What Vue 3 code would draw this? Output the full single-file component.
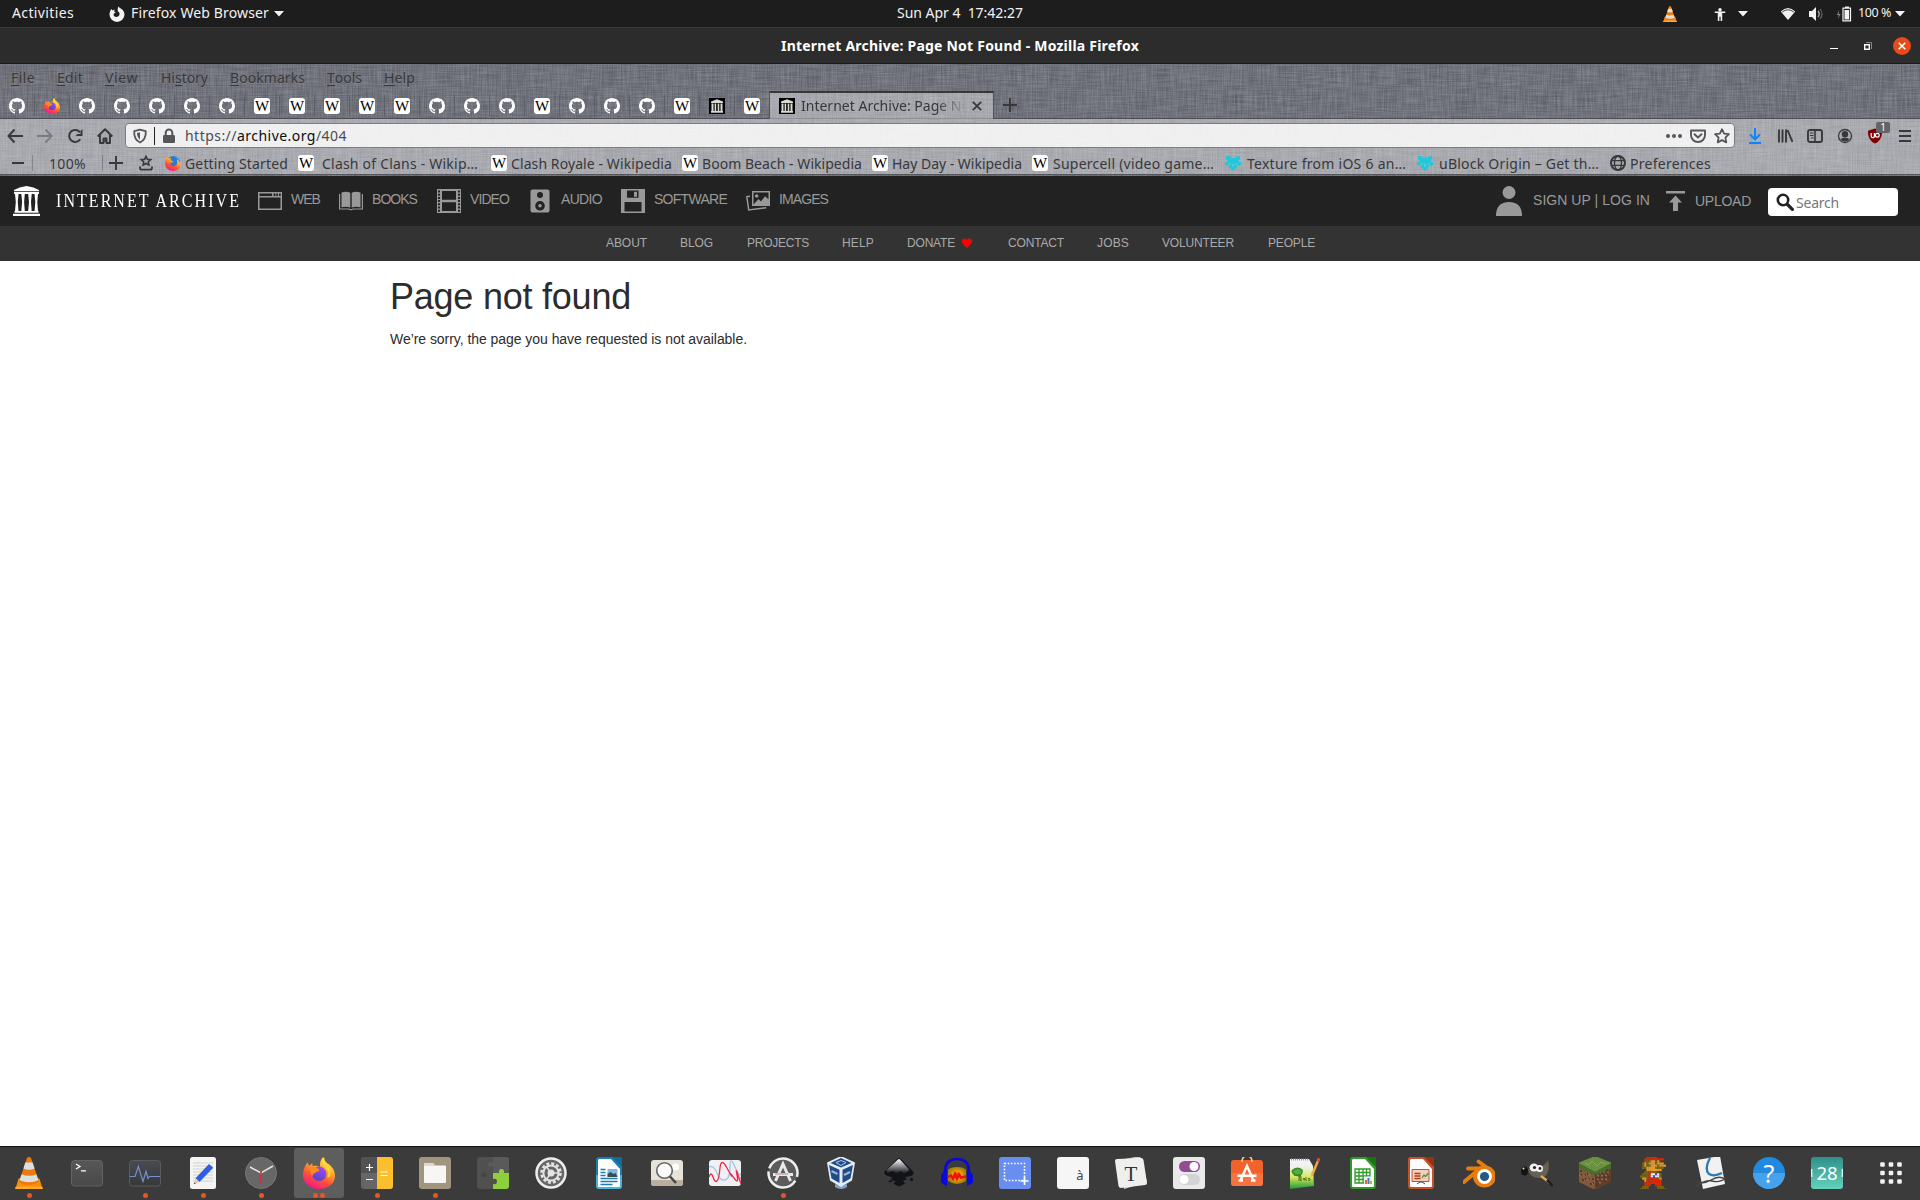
<script setup>
import { h } from 'vue'

// Spreads the letters of a label so that it fills its slot exactly.
function fitText(el, width) {
  const range = document.createRange()
  range.selectNodeContents(el)
  const natural = range.getBoundingClientRect().width
  const count = Array.from(el.textContent).length
  if (natural && count) el.style.letterSpacing = (width - natural) / count + 'px'
}
const vFit = { mounted: (el, binding) => fitText(el, binding.value) }

// A horizontal run of icons and labels; `at` is where an item starts in the bar.
function Strip(props) {
  let end = props.from || 0
  return h('div', { class: 'strip' }, props.items.map((item) => {
    const style = { marginLeft: item.at - end + 'px', width: item.w + 'px' }
    if (item.dy) style.marginTop = item.dy * 2 + 'px'
    end = item.at + item.w
    if (item.icon === 'wiki') return h('span', { class: 'wiki', style }, 'W')
    if (item.icon === 'ublock') {
      return h('div', { class: 'ublock', style }, [
        h('svg', { class: 'ublock-shield' }, [h('use', { href: '#ublock' })]),
        h('span', { class: 'ublock-badge' }, '1')
      ])
    }
    if (item.icon) {
      style.height = (item.h || item.w) + 'px'
      return h('svg', { class: ['icon', item.cls], style }, [h('use', { href: '#' + item.icon })])
    }
    if (item.rule) {
      return h('i', { class: 'rule', style: { ...style, height: item.rule + 'px' } })
    }
    let content = item.text
    if (item.key !== undefined) {
      content = [item.text.slice(0, item.key), h('u', item.text[item.key]), item.text.slice(item.key + 1)]
    }
    return h('span', {
      class: ['label', item.cls], style,
      onVnodeMounted: (vnode) => fitText(vnode.el, item.w)
    }, content)
  }))
}
Strip.props = ['items', 'from']

const panel = [
  { at: 12, w: 62, text: 'Activities' },
  { at: 109, w: 16, icon: 'ff-mono' },
  { at: 131, w: 138, text: 'Firefox Web Browser' },
  { at: 274, w: 10, h: 6, icon: 'caret' },
  { at: 897, w: 126, text: 'Sun Apr 4  17:42:27' },
  { at: 1662, w: 16, icon: 'vlc' },
  { at: 1713, w: 14, icon: 'person' },
  { at: 1738, w: 10, h: 6, icon: 'caret' },
  { at: 1780, w: 16, icon: 'wifi' },
  { at: 1808, w: 16, icon: 'volume' },
  { at: 1836, w: 16, icon: 'battery' },
  { at: 1858, w: 33, text: '100 %', cls: 'small' },
  { at: 1895, w: 10, h: 6, icon: 'caret' }
]
const windowButtons = [
  { at: 1830, w: 8, icon: 'minimize' },
  { at: 1863, w: 10, icon: 'restore' },
  { at: 1893, w: 18, icon: 'close-round' }
]
const menus = [
  { at: 11, w: 24, text: 'File', key: 0 },
  { at: 57, w: 26, text: 'Edit', key: 0 },
  { at: 105, w: 33, text: 'View', key: 0 },
  { at: 161, w: 47, text: 'History', key: 2 },
  { at: 230, w: 75, text: 'Bookmarks', key: 0 },
  { at: 327, w: 35, text: 'Tools', key: 0 },
  { at: 384, w: 31, text: 'Help', key: 0 }
]
const tabs = 'gh ff gh gh gh gh gh wiki wiki wiki wiki wiki gh gh gh wiki gh gh gh wiki ia-fav wiki'.split(' ')
const navLeft = [
  { at: 7, w: 16, icon: 'back' },
  { at: 37, w: 16, icon: 'forward', cls: 'faded' },
  { at: 67, w: 16, icon: 'reload' },
  { at: 97, w: 16, icon: 'home' }
]
const identity = [
  { at: 132, w: 16, icon: 'shield' },
  { at: 154, w: 1, rule: 18 },
  { at: 161, w: 16, icon: 'lock' }
]
const pageActions = [
  { at: 1666, w: 16, icon: 'dots' },
  { at: 1690, w: 16, icon: 'pocket' },
  { at: 1714, w: 16, icon: 'star' }
]
const navRight = [
  { at: 1747, w: 16, icon: 'download', cls: 'blue' },
  { at: 1777, w: 16, icon: 'library' },
  { at: 1807, w: 16, icon: 'sidebar' },
  { at: 1837, w: 16, icon: 'account' },
  { at: 1868, w: 22, icon: 'ublock' },
  { at: 1897, w: 16, icon: 'burger' }
]
const bookmarks = [
  { at: 10, w: 16, icon: 'minus' },
  { at: 32, w: 1, rule: 16 },
  { at: 49, w: 37, text: '100%' },
  { at: 102, w: 1, rule: 16 },
  { at: 108, w: 16, icon: 'plus' },
  { at: 138, w: 16, icon: 'bookmark-tray' },
  { at: 165, w: 16, icon: 'ff-classic' },
  { at: 185, w: 103, text: 'Getting Started' },
  { at: 298, w: 16, icon: 'wiki' },
  { at: 322, w: 156, text: 'Clash of Clans - Wikip…' },
  { at: 491, w: 16, icon: 'wiki' },
  { at: 511, w: 161, text: 'Clash Royale - Wikipedia' },
  { at: 682, w: 16, icon: 'wiki' },
  { at: 702, w: 160, text: 'Boom Beach - Wikipedia' },
  { at: 872, w: 16, icon: 'wiki' },
  { at: 892, w: 130, text: 'Hay Day - Wikipedia' },
  { at: 1032, w: 16, icon: 'wiki' },
  { at: 1053, w: 161, text: 'Supercell (video game…' },
  { at: 1225, w: 16, icon: 'puzzle' },
  { at: 1247, w: 159, text: 'Texture from iOS 6 an…' },
  { at: 1417, w: 16, icon: 'puzzle' },
  { at: 1439, w: 160, text: 'uBlock Origin – Get th…' },
  { at: 1610, w: 16, icon: 'globe' },
  { at: 1630, w: 81, text: 'Preferences' }
]
const media = [
  { at: 13, w: 27, h: 30, icon: 'ia-logo', cls: 'white' },
  { at: 56, w: 185, text: 'INTERNET ARCHIVE', cls: 'wordmark' },
  { at: 258, w: 24, icon: 'm-web' },
  { at: 291, w: 29, text: 'WEB', dy: -2 },
  { at: 339, w: 24, icon: 'm-books' },
  { at: 372, w: 45, text: 'BOOKS', dy: -2 },
  { at: 437, w: 24, icon: 'm-video' },
  { at: 470, w: 39, text: 'VIDEO', dy: -2 },
  { at: 528, w: 24, icon: 'm-audio' },
  { at: 561, w: 41, text: 'AUDIO', dy: -2 },
  { at: 621, w: 24, icon: 'm-software' },
  { at: 654, w: 73, text: 'SOFTWARE', dy: -2 },
  { at: 746, w: 24, icon: 'm-images' },
  { at: 779, w: 49, text: 'IMAGES', dy: -2 }
]
const accountLinks = [
  { at: 1496, w: 26, h: 30, icon: 'user' },
  { at: 1533, w: 117, text: 'SIGN UP | LOG IN', dy: -1 },
  { at: 1666, w: 19, h: 20, icon: 'upload' },
  { at: 1695, w: 56, text: 'UPLOAD' }
]
const links = [
  { at: 606, w: 41, text: 'ABOUT' },
  { at: 680, w: 33, text: 'BLOG' },
  { at: 747, w: 62, text: 'PROJECTS' },
  { at: 842, w: 32, text: 'HELP' },
  { at: 907, w: 48, text: 'DONATE' },
  { at: 961, w: 12, icon: 'heart' },
  { at: 1008, w: 56, text: 'CONTACT' },
  { at: 1097, w: 32, text: 'JOBS' },
  { at: 1162, w: 72, text: 'VOLUNTEER' },
  { at: 1268, w: 47, text: 'PEOPLE' }
]
const dock = [
  ['vlc', 1], ['terminal', 0], ['monitor', 1], ['editor', 1], ['clock', 1], ['ff', 2], ['calc', 1],
  ['files', 1], ['extensions', 0], ['settings', 0], ['writer', 0], ['viewer', 0], ['plot', 0], ['updater', 1],
  ['vbox', 0], ['inkscape', 0], ['audacity', 0], ['screenshot', 0], ['chars', 0], ['fonts', 0], ['tweaks', 0],
  ['software', 0], ['notepad', 0], ['sheet', 0], ['impress', 0], ['blender', 0], ['gimp', 0], ['minecraft', 0],
  ['mario', 0], ['evince', 0], ['help', 0], ['calendar', 0], ['apps', 0]
]
const glyphs = { chars: 'à', fonts: 'T', help: '?', calendar: '28' }

// Pixel rows of the plumber sprite: R red, B brown, S skin, W white, U blue.
const sprite = [
  '...RRRRR....', '..RRRRRRRRR.', '..BBBSSBS...', '.BSBSSSBSSS.', '.BSBBSSSBSSS', '.BBSSSSBBBB.', '...SSSSSSS..',
  '..BBRBBB....', '.BBBRWWUWB..', 'BBBBRWUWWB..', '.SSBRRRRBS..', '..SRRRRRRR..', '..RRRRRRRR..', '..RRR..RRR..', '.BBB....BBB.', 'BBBB....BBBB'
]
const tint = { R: '#dc2a08', B: '#806808', S: '#e89c30', W: '#f4f4ff', U: '#4050d8' }
const pixels = sprite.flatMap((row, y) => [...row].map((c, x) => ({ x, y, fill: tint[c] })).filter((p) => p.fill))
const pixelBlocks = Array.from({ length: 56 }, (_, i) => {
  const x = (i * 7) % 30
  const drop = Math.abs(x - 15) / 2
  return { x, y: 15 + (i * 5) % 14 - drop, dark: i % 2 }
})
</script>

<template>
  <div class="desktop">
    <svg class="sprite" width="0" height="0" aria-hidden="true">
      <defs>
        <linearGradient id="g-ff" x1=".8" y1="0" x2=".3" y2="1"><stop offset="0" stop-color="#fff44f" /><stop offset=".35" stop-color="#ffb02a" /><stop offset=".65" stop-color="#ff5634" /><stop offset="1" stop-color="#f2148c" /></linearGradient>
        <linearGradient id="g-purple" x1=".7" y1="0" x2=".3" y2="1"><stop offset="0" stop-color="#a04dee" /><stop offset="1" stop-color="#5441c8" /></linearGradient>
        <linearGradient id="g-key" x1="0" y1="0" x2="0" y2="1"><stop offset="0" stop-color="#585858" /><stop offset="1" stop-color="#484848" /></linearGradient>
        <linearGradient id="g-night" x1="0" y1="0" x2="0" y2="1"><stop offset="0" stop-color="#4a4b50" /><stop offset="1" stop-color="#37383c" /></linearGradient>
        <linearGradient id="g-teal" x1="0" y1="0" x2="0" y2="1"><stop offset="0" stop-color="#2f8f8b" /><stop offset="1" stop-color="#63d3bb" /></linearGradient>
        <linearGradient id="g-note" x1="0" y1="0" x2="0" y2="1"><stop offset="0" stop-color="#f4f6ff" /><stop offset=".3" stop-color="#eef0e4" /><stop offset=".6" stop-color="#d8e860" /><stop offset="1" stop-color="#1a9a38" /></linearGradient>
        <linearGradient id="g-ink" x1="0" y1="0" x2="0" y2="1"><stop offset="0" stop-color="#fff" /><stop offset=".45" stop-color="#8a8c90" /><stop offset=".9" stop-color="#15171b" /></linearGradient>
        <radialGradient id="g-wave"><stop offset="0" stop-color="#f01800" /><stop offset=".5" stop-color="#f0a000" /><stop offset="1" stop-color="#a08010" /></radialGradient>
      </defs>

      <!-- panel -->
      <symbol id="ff-mono" viewBox="0 0 16 16"><path fill="currentColor" d="M9.500 0.200c.3 1.200 1.100 1.700 2.300 2.300 1.800 1 3.700 3 3.700 6.100a7.500 7.300 0 0 1-15 0c0-2.200.8-4.300 2.100-5.600l.6 1.400c.7-.4 1.700-.6 2.600-.5-.7.700-1 1.100-.8 1.700l1.500.3c.2 1-.9 1-1.600 1.700-.5.600-.4 2 .4 2.700 1.500 1.300 4 .8 4.900-1 .9-1.600.2-3.500-1.400-4.100-.3-2 .1-3.700.7-5z" /></symbol>
      <symbol id="caret" viewBox="0 0 10 6"><path d="M0 0h10L5 5.500z" fill="currentColor" /></symbol>
      <symbol id="person" viewBox="0 0 14 16"><path fill="currentColor" d="M7 1a2 2 0 1 1 0 4 2 2 0 0 1 0-4zM1 5.200h12v1.600H9.500V16H7.700v-5H6.300v5H4.500V6.800H1z" /></symbol>
      <symbol id="wifi" viewBox="0 0 16 16"><path d="M.8 5.500Q8-1.500 15.200 5.500L8 14z" fill="currentColor" /><path d="M2.200 6Q8 1.500 13.800 6" fill="none" stroke="#1d1d1d" stroke-width=".8" /></symbol>
      <symbol id="volume" viewBox="0 0 16 16"><path d="M1 5h3l4-4v14l-4-4H1z" fill="currentColor" /><path d="M10 5q2.500 3 0 6" fill="none" stroke="#bbb" stroke-width="1.200" /><path d="M12 3q4 5 0 10" fill="none" stroke="#666" stroke-width="1.200" /></symbol>
      <symbol id="battery" viewBox="0 0 16 16"><path d="M9 2.200h5.500v12.600H7V2.200zM9 1h4" fill="none" stroke="currentColor" stroke-width="1.200" /><path d="M8.500 4h4.600v9.500H8.500z" fill="currentColor" /><path d="M3.300 4L.8 9h2L2 13l2.500-5h-2z" fill="#888" /></symbol>
      <symbol id="vlc" viewBox="0 0 32 32"><path d="M5.500 21.500h21l3 10.500h-27z" fill="#f78b0b" /><path d="M2.800 29.500h26.400L30 32H2z" fill="#ffab24" /><path d="M14 1q2-2 4 0l8 24q-10 6-20 0z" fill="#ef7a0c" /><path d="M12.300 5.500h7.300l2 6q-5.600 2.500-11.200 0zM8.600 17.300q7.400 3 14.800 0l2 6q-9.400 4-18.800 0z" fill="#dcdfe0" /></symbol>
      <symbol id="minimize" viewBox="0 0 8 8"><path d="M0 6.500h8" stroke="#fff" /></symbol>
      <symbol id="restore" viewBox="0 0 10 10"><path d="M3 1.500h5.500V8" fill="none" stroke="#888" /><path d="M1.700 3.700h4.600v4.600H1.700z" fill="none" stroke="#fff" stroke-width="1.400" /></symbol>
      <symbol id="close-round" viewBox="0 0 18 18"><circle cx="9" cy="9" r="9" fill="#e54c19" /><path d="M5.700 5.700l6.600 6.600m0-6.600l-6.600 6.600" stroke="#fff" stroke-width="1.600" /></symbol>

      <!-- browser -->
      <symbol id="gh" viewBox="0 0 16 16"><path fill="#fff" d="M8 0C3.580 0 0 3.580 0 8c0 3.540 2.290 6.530 5.470 7.590.4.070.55-.17.55-.38 0-.19-.01-.82-.01-1.490-2.010.37-2.530-.49-2.690-.94-.09-.23-.48-.94-.82-1.130-.28-.15-.68-.52-.01-.53.63-.01 1.080.58 1.230.82.72 1.210 1.870.87 2.330.66.07-.52.28-.87.51-1.070-1.780-.2-3.640-.89-3.640-3.950 0-.87.31-1.590.82-2.150-.08-.2-.36-1.020.08-2.120 0 0 .67-.21 2.200.82.64-.18 1.320-.27 2-.27.68 0 1.360.09 2 .27 1.530-1.040 2.200-.82 2.200-.82.44 1.100.16 1.920.08 2.120.51.56.82 1.270.82 2.150 0 3.070-1.870 3.750-3.650 3.950.29.25.54.73.54 1.480 0 1.070-.01 1.930-.01 2.200 0 .21.15.46.55.38A8.010 8.010 0 0 0 16 8c0-4.420-3.580-8-8-8z" /></symbol>
      <symbol id="ia-fav" viewBox="0 0 16 16"><path fill="#000" d="M0 0h16v16H0z" /><path fill="#d9d9d2" d="M2 3.500L8 1.300l6 2.200V5H2zM2 13h12v1.700H2zM2.500 5.500h2V13h-2zM5.600 5.500h1.600V13H5.600zM8.700 5.500h1.600V13H8.700zM11.500 5.500h2V13h-2z" /></symbol>
      <symbol id="ff" viewBox="0 0 32 32"><path fill="url(#g-ff)" d="M20.500 0c.5 3 2 4.500 4 6.500l1.200.5c4 3 6.300 7.300 6.300 12C32 26.500 25 32 16 32S0 26 0 18C0 14 1.200 9.500 4.500 5.500l1.600 3.300 3.200-2.600.4 3c3-.8 5.300-.3 7.500 1.300C16.500 6 17.500 2.600 20.500 0z" /><circle cx="16.200" cy="16.800" r="7.200" fill="url(#g-purple)" /><path d="M3.500 12.500c3.500-3.600 7.800-3.500 11.800-.8l1.200 2.300c-2 .2-3.400 1-4.500 2.300-1.700.2-2.500 1.300-2.500 3-2-1.300-2.300-3.700-1-5.500z" fill="#ff8a1c" /><path d="M20.500 1c-.8 4 .5 6.500 3.300 9 3.200 3 3.500 6.500 1.500 10" fill="none" stroke="#ffdb40" stroke-width="2.400" opacity=".8" /></symbol>
      <symbol id="ff-classic" viewBox="0 0 32 32"><circle cx="17" cy="15" r="13" fill="#2c78d4" /><path d="M17 3q9 0 13 8l-4-1q-2-5-9-7z" fill="#1fb5f2" /><path fill="url(#g-ff)" d="M3 3l4 4 5-1-1 4 7 4-7 2c-1 5 4 8 9 6 5-3 6-8 3-13 6 2 8 7 8 11 0 7-7 12-15 12S0 26 0 17C0 11 1 7 3 3z" /></symbol>
      <symbol id="close" viewBox="0 0 10 10"><path d="M.8.800l8.400 8.400m0-8.400L.8 9.200" stroke="currentColor" stroke-width="1.800" /></symbol>
      <symbol id="plus" viewBox="0 0 16 16"><path d="M8 1v14M1 8h14" stroke="currentColor" stroke-width="1.900" /></symbol>
      <symbol id="minus" viewBox="0 0 16 16"><path d="M2 8h12" stroke="currentColor" stroke-width="2" /></symbol>
      <symbol id="back" viewBox="0 0 16 16"><path d="M7.500 1.500L1.500 8l6 6.500M2 8h14" fill="none" stroke="currentColor" stroke-width="2" /></symbol>
      <symbol id="forward" viewBox="0 0 16 16"><path d="M8.500 1.500l6 6.500-6 6.500M14 8H0" fill="none" stroke="currentColor" stroke-width="2" /></symbol>
      <symbol id="reload" viewBox="0 0 16 16"><path d="M13.200 11.200A6 6 0 1 1 13 4.400" fill="none" stroke="currentColor" stroke-width="2" /><path d="M15.500 1v7h-7l2-2h3V3z" fill="currentColor" /></symbol>
      <symbol id="home" viewBox="0 0 16 16"><path d="M.7 8.500L8 1.300l7.300 7.200M3 7v8h3.500v-4.500h3V15H13V7" fill="none" stroke="currentColor" stroke-width="1.900" stroke-linejoin="round" /><path d="M7.200 11.500h1.600V14H7.200z" fill="currentColor" /></symbol>
      <symbol id="shield" viewBox="0 0 16 16"><path d="M8 1.700l5.800 1.500c.2 5-1 9-5.800 11.300C3.200 12.200 2 8.200 2.200 3.200z" fill="none" stroke="currentColor" stroke-width="1.800" stroke-linejoin="round" /><path d="M8 4.300v7.400C5.500 9.700 5 7.700 5 5.100z" fill="currentColor" /></symbol>
      <symbol id="lock" viewBox="0 0 16 16"><rect x="2" y="7" width="12" height="8" rx="1.300" fill="currentColor" /><path d="M4.700 8V4.800a3.300 3.300 0 0 1 6.600 0V8" fill="none" stroke="currentColor" stroke-width="2" /></symbol>
      <symbol id="dots" viewBox="0 0 16 16"><g fill="currentColor"><circle cx="2" cy="8" r="2" /><circle cx="8" cy="8" r="2" /><circle cx="14" cy="8" r="2" /></g></symbol>
      <symbol id="pocket" viewBox="0 0 16 16"><path d="M1 2.500h14V7c0 4-3 7-7 7s-7-3-7-7zM4.500 6.200L8 9.500l3.500-3.300" fill="none" stroke="currentColor" stroke-width="1.900" stroke-linejoin="round" stroke-linecap="round" /></symbol>
      <symbol id="star" viewBox="0 0 16 16"><path d="M8 1.200l2.100 4.400 4.800.6-3.500 3.400.9 4.800L8 12.100l-4.300 2.300.9-4.800L1.100 6.200l4.800-.6z" fill="none" stroke="currentColor" stroke-width="1.800" stroke-linejoin="round" /></symbol>
      <symbol id="download" viewBox="0 0 16 16"><path d="M8 0v11M3 6.500L8 11.300l5-4.800M2 15h12" fill="none" stroke="currentColor" stroke-width="2" /></symbol>
      <symbol id="library" viewBox="0 0 16 16"><path d="M2 1.500v13M5.500 1.500v13M9 1.500v13M10.500 2l5 12" stroke="currentColor" stroke-width="1.900" /></symbol>
      <symbol id="sidebar" viewBox="0 0 16 16"><rect x="1" y="2" width="14" height="12" rx="2" fill="none" stroke="currentColor" stroke-width="1.900" /><path d="M8 2v12" stroke="currentColor" stroke-width="1.600" /><path d="M3 5h3.500M3 7.500h3.500M4 10h2.500" stroke="currentColor" /></symbol>
      <symbol id="account" viewBox="0 0 16 16"><circle cx="8" cy="8" r="6.500" fill="none" stroke="currentColor" stroke-width="1.300" /><circle cx="8" cy="6.300" r="3.200" fill="currentColor" /><path d="M3.500 11q4.500-2.500 9 0-1.500 2.600-4.500 2.600T3.500 11z" fill="currentColor" /></symbol>
      <symbol id="ublock" viewBox="0 0 14 16"><path d="M7 .5l7 2.200c.2 6-2 10.500-7 12.800C2 13.200-.2 8.700 0 2.700z" fill="#800000" /><path d="M3.200 5v3q0 1.700 1.600 1.700T6.400 8V5" fill="none" stroke="#fff" stroke-width="1.200" /><circle cx="9.300" cy="7.300" r="1.900" fill="none" stroke="#fff" stroke-width="1.200" /></symbol>
      <symbol id="burger" viewBox="0 0 16 16"><path d="M2 3h12M2 8h12M2 13h12" stroke="currentColor" stroke-width="2" /></symbol>
      <symbol id="bookmark-tray" viewBox="0 0 16 16"><path d="M8 1.300l1.400 3 3.300.4-2.400 2.200.6 3.200L8 8.500l-2.900 1.600.6-3.200-2.400-2.200 3.300-.4z" fill="none" stroke="currentColor" stroke-width="1.600" /><path d="M2 11.500v1.200q0 2 2 2h8q2 0 2-2v-1.200" fill="none" stroke="currentColor" stroke-width="1.800" /></symbol>
      <symbol id="puzzle" viewBox="0 0 16 16"><path fill="#1fc8dc" d="M1 1h3l1 1.500L7.500 3h1L11 2.500 12 1h3v3l-1.500 1 .3 2H16v3l-2 1-1.800-.7-.7 2.200L9 15.500H7l-2.500-3-.7-2.200L2 11l-2-1V7h2.200l.3-2L1 4z" /><path d="M6.800 9.500L8 12l1.200-2.500zM3.500 8.500h2v1h-2zM10.500 8.500h2v1h-2z" fill="#b4b8be" /></symbol>
      <symbol id="globe" viewBox="0 0 16 16"><g fill="none" stroke="currentColor" stroke-width="1.300"><circle cx="8" cy="8" r="7" stroke-width="2" /><ellipse cx="8" cy="8" rx="3.500" ry="7" /><path d="M1.500 5.700h13M1.500 10.300h13" /></g></symbol>

      <!-- archive header -->
      <symbol id="ia-logo" viewBox="0 0 27 30"><path fill="currentColor" d="M1 4Q6 .8 13.500 0 21 .8 26 4v1H1zM1 5.800h25V8H1zM1.500 25h24v1.800h-24zM0 27.700h27V30H0zM2 8h3.500l-.7 8 .7 9H2l.8-9zM8.300 8h3.500l-.7 8 .7 9H8.300l.8-9zM15.200 8h3.500l-.7 8 .7 9h-3.500l.8-9zM21.500 8H25l-.7 8 .7 9h-3.500l.8-9z" /></symbol>
      <symbol id="m-web" viewBox="0 0 24 24"><path fill="#999" fill-rule="evenodd" d="M0 3h24v18H0zM1.500 8.500v11h21v-11zM1.500 4.500V7H14V4.500zM15.500 4.500V7h2V4.500zM18.300 4.500V7h1.700V4.500zM21 4.500V7h1.700V4.500z" /></symbol>
      <symbol id="m-books" viewBox="0 0 24 24"><path d="M2.500 3.500q5-1.500 8.800.3v14.700q-4-1.500-8.800-.2zM12.700 3.800q4-1.800 8.800-.3v14.800q-5-1.300-8.800.2z" fill="#999" /><path d="M.6 5v15h9.400q2 1.200 4 0h9.400V5" fill="none" stroke="#999" stroke-width="1.200" /></symbol>
      <symbol id="m-video" viewBox="0 0 24 24"><path fill="#999" fill-rule="evenodd" d="M0 0h24v24H0zM5 2v8.700h14V2zM5 13.200V22h14v-8.800z" /><path d="M2 1.500V24M22 1.500V24" stroke="#222" stroke-width="2" stroke-dasharray="2 1.200" /></symbol>
      <symbol id="m-audio" viewBox="0 0 24 24"><path fill="#999" fill-rule="evenodd" d="M4.500.500h15q2 0 2 2v19q0 2-2 2h-15q-2 0-2-2v-19q0-2 2-2zM12 3a3 3 0 1 0 0 6 3 3 0 0 0 0-6zM12 12a4.800 4.800 0 1 0 0 9.600 4.800 4.800 0 0 0 0-9.600z" /><circle cx="12" cy="16.800" r="1.800" fill="#999" /></symbol>
      <symbol id="m-software" viewBox="0 0 24 24"><path fill="#999" fill-rule="evenodd" d="M0 0h24v24H0zM6 1.500v7.300h11.500V1.500zM3.500 13v9.500h17V13z" /><path fill="#999" d="M13 2.800h3v5h-3z" /></symbol>
      <symbol id="m-images" viewBox="0 0 24 24"><path fill="#999" fill-rule="evenodd" d="M6 2h18v15H6zM7.500 3.500v12l5-5.500 2.500 2.500 4-5.300 3.500 3V3.500z" /><circle cx="10.700" cy="7" r="1.800" fill="#999" /><path d="M4 7.200L.8 7.600l1.900 13.300 17.600-2.200" fill="none" stroke="#999" stroke-width="1.500" /></symbol>
      <symbol id="user" viewBox="0 0 26 30"><circle cx="13" cy="6.500" r="6.500" fill="#999" /><path d="M0 30q0-14 13-14t13 14z" fill="#999" /></symbol>
      <symbol id="upload" viewBox="0 0 19 20"><path d="M0 0h19v2.500H0zM9.500 4.500l6.500 7h-4V20H7v-8.500H3z" fill="#999" /></symbol>
      <symbol id="heart" viewBox="0 0 12 12"><path d="M6 11Q.9 7 .9 4.300C.9 1 4.900.6 6 3c1.100-2.400 5.100-2 5.100 1.300C11.100 7 6 11 6 11z" fill="#f00" /></symbol>
      <symbol id="search" viewBox="0 0 18 18"><circle cx="7" cy="7" r="5.200" fill="none" stroke="#222" stroke-width="2.600" /><path d="M11 11l6.500 6.500" stroke="#222" stroke-width="3.200" /></symbol>

      <!-- dock -->
      <symbol id="terminal" viewBox="0 0 32 32"><rect x=".5" y="3.500" width="31" height="25.500" rx="3" fill="url(#g-key)" stroke="#626262" /><path d="M5 7l4 2.500L5 12M10 13.800h5" fill="none" stroke="#fff" stroke-width="1.300" /></symbol>
      <symbol id="monitor" viewBox="0 0 32 32"><rect x=".5" y="3.500" width="31" height="25.500" rx="3" fill="url(#g-night)" stroke="#5b5c60" /><path d="M1 19.500h5L9.300 9.500l4.700 15 3-10 2 7 1.500-2H31" fill="none" stroke="#7590cc" stroke-width="1.200" /></symbol>
      <symbol id="editor" viewBox="0 0 32 32"><rect x="3" y="0" width="26" height="32" rx="2.500" fill="#f4f4f2" /><path d="M6 6h20M6 9h20M6 12h20M6 15h20M6 18h20M6 21h20M6 24h20" stroke="#d0d0ce" /><path d="M22 7l4.200 3.700L12.500 25l-4-3.700z" fill="#2d5fe0" /><path d="M8.500 21.300l4 3.700-5.500 2z" fill="#f0c9a0" /><path d="M7.400 25.300l1.500 1.100-1.900.6z" fill="#333" /></symbol>
      <symbol id="clock" viewBox="0 0 32 32"><circle cx="16" cy="16" r="15.500" fill="#676767" stroke="#777" /><path d="M5 10l11 6 12-7" fill="none" stroke="#e5e5dc" stroke-width="1.500" /><path d="M16 14v13" stroke="#e5263e" stroke-width="1.600" /></symbol>
      <symbol id="calc" viewBox="0 0 32 32"><rect width="32" height="32" rx="3" fill="#666" /><path d="M3 0h13v16H0V3q0-3 3-3z" fill="#525252" /><path d="M16 0h13q3 0 3 3v26q0 3-3 3H16z" fill="#fbbf2d" /><path d="M5 10.500h7M8.500 7v7M5 22.500h7M19.500 15h7M19.500 18.500h7" stroke="#fff" stroke-width="1.200" /></symbol>
      <symbol id="files" viewBox="0 0 32 32"><rect width="32" height="32" rx="3" fill="#a0967f" /><path d="M5 7q0-1 1-1h7l2 2.500h11q1 0 1 1V25q0 1-1 1H6q-1 0-1-1z" fill="#f7f6f3" /><path d="M5 9h10l1-1-2-2H6Q5 6 5 7z" fill="#ded9cc" /></symbol>
      <symbol id="extensions" viewBox="0 0 32 32"><rect width="32" height="32" rx="3" fill="#505050" /><path d="M16 0h13q3 0 3 3v13H16z" fill="#5a5a5a" /><path d="M16 16h6q-.5-4 2.500-4t2.500 4h5v13q0 3-3 3H16v-5q4 1 4-2.500T16 22z" fill="#8ed03a" /><circle cx="13.500" cy="7.500" r="2.500" fill="#5a5a5a" /><circle cx="7" cy="18" r="2.500" fill="#454545" /></symbol>
      <symbol id="settings" viewBox="0 0 32 32"><circle cx="16" cy="16" r="14.500" fill="#666" stroke="#eee" stroke-width="2.500" /><circle cx="16" cy="16" r="9.500" fill="none" stroke="#e4e4e4" stroke-width="2.600" stroke-dasharray="3 1.970" /><circle cx="16" cy="16" r="7.600" fill="none" stroke="#e4e4e4" stroke-width="2" /><circle cx="16" cy="16" r="3.500" fill="#e4e4e4" /><path d="M16 16L11 9m5 7l8 0m-8 0l-5 7" stroke="#e4e4e4" stroke-width="1.500" /></symbol>
      <symbol id="writer" viewBox="0 0 32 32"><path d="M5.500 0H29v29q0 3-3 3H6q-3 0-3-3V3q0-3 2.500-3z" fill="#1b7dac" /><path d="M3 18h26v11q0 3-3 3H6q-3 0-3-3z" fill="#4ab3dd" /><path d="M6 2h12l9 10v17q0 1-1 1H6q-1 0-1-1V3z" fill="#fff" /><path d="M19 0h10v10z" fill="#116a9c" /><path d="M7.500 12.500h5M7.500 15.500h5M7.500 18.500h5M7.500 21.500h17M7.500 24.500h17M7.500 27.500h12" stroke="#1c7cac" stroke-width="1.500" /><path d="M14.500 12h10v8h-10z" fill="#7fb8dc" /><path d="M14.500 20v-3l3-2 3 2 2-1 2 4z" fill="#3b4c50" /></symbol>
      <symbol id="viewer" viewBox="0 0 32 32"><rect y="3" width="32" height="26" rx="3" fill="#e6e3d9" /><path d="M0 23h32v3q0 3-3 3H3q-3 0-3-3z" fill="#b8b19d" /><circle cx="24.500" cy="10" r="3.500" fill="#fff" /><circle cx="13.500" cy="13.500" r="7.800" fill="#fafafa" stroke="#666" stroke-width="1.600" /><path d="M19 19.500l6 6.500" stroke="#444" stroke-width="2.500" /></symbol>
      <symbol id="plot" viewBox="0 0 32 32"><rect y="3" width="32" height="26" rx="3" fill="#f0f0f2" /><path d="M0 10q5-2 8 6t8 7 5-13 5 0 6 6" fill="none" stroke="#a6c8ea" stroke-width="1.500" /><path d="M0 20q2-6 4 0t4 4 3-13 7 0 4 7 3 3 3-3 2 3 2-1" fill="none" stroke="#e32c50" stroke-width="1.300" /></symbol>
      <symbol id="updater" viewBox="0 0 32 32"><circle cx="16" cy="16" r="14.500" fill="#5c5c5c" stroke="#eee" stroke-width="2.500" stroke-dasharray="39 3 45 4" stroke-dashoffset="-8" /><path d="M8.500 24L16 7l7.500 17" fill="none" stroke="#e8e8e8" stroke-width="3" /><path d="M6 17.500h20" stroke="#e8e8e8" stroke-width="3" /><path d="M8 17h13" stroke="#b879a8" stroke-width="1" /></symbol>
      <symbol id="vbox" viewBox="0 0 32 32"><path d="M10 27q6 3 12 0v3q-6 4-12 0z" fill="#7fa3cc" /><path d="M16-1l14 6.500-3 18L16 30 5 23.500 2 5.500z" fill="#e6ebf4" /><path d="M16 1l10.500 5L16 10.500 5.500 6zM4 8l10.500 4.800V26L6.500 21.500zM28 8l-10.500 4.800V26l8-4.500z" fill="#1f4c88" /><path d="M6.500 14l6 3M19 18l6-3" stroke="#9fb4d0" stroke-width="2" /><path d="M11 5.500l5-2 5 2-5 3z" fill="none" stroke="#b8c8e0" /></symbol>
      <symbol id="inkscape" viewBox="0 0 32 32"><path d="M14 2q2-2 4 0l12 12.500q2 3-2 4.500l-6 1 2 2.500-4 1 2 3-5.500 3-6-2.500 2-2.500-5-2 2-2-6-2q-4-2-1-5z" fill="#111318" /><path d="M15 2.500q1-.8 2 0l9.500 10.500-5 4-4-3-3.500 4-4-4-5.500 2-1-3z" fill="url(#g-ink)" /><circle cx="28.500" cy="22.500" r="1.700" fill="#15171b" /><path d="M5 24l3-1 2 1.500-3 1z" fill="#15171b" /></symbol>
      <symbol id="audacity" viewBox="0 0 32 32"><path d="M7 24V13q2-3 9-3t9 3v11q-9 6-18 0z" fill="url(#g-wave)" /><path d="M7 20l3-1.500 2 3 2-4.500 2 4.500 2-4 2 3 5-1" stroke="#f01010" stroke-width="2.500" fill="none" /><path d="M4 15Q4 2 16 2t12 13" fill="none" stroke="#0808d8" stroke-width="2.600" /><path d="M6 12Q-1 17-1 22t7 7zM26 12q7 5 7 10t-7 7z" fill="#0a0ae0" /></symbol>
      <symbol id="screenshot" viewBox="0 0 32 32"><rect width="32" height="32" rx="3" fill="#678ef0" /><path d="M5.500 6.500h20v17h-20z" fill="none" stroke="#fff" stroke-width="1.600" stroke-dasharray="1.600 1.600" /><path d="M25.500 20v8M21.500 24h8" stroke="#fff" stroke-width="1.600" /></symbol>
      <symbol id="chars" viewBox="0 0 32 32"><rect width="32" height="32" rx="3" fill="#f6f6f6" /></symbol>
      <symbol id="fonts" viewBox="0 0 32 32"><path d="M5 3L25-1l7 26-23 7z" fill="#cfcfcf" /><path d="M0 4q0-2 2-2l24-1q2 0 2.500 2L32 26q0 2-2 2L6 31q-2 0-2.500-2z" fill="#efefee" /></symbol>
      <symbol id="tweaks" viewBox="0 0 32 32"><rect width="32" height="32" rx="3" fill="#e9e9ec" /><rect x="6" y="4" width="21" height="11" rx="5.500" fill="#934b93" /><rect x="6" y="17" width="21" height="11" rx="5.500" fill="#d3d3d3" /><circle cx="21" cy="9.500" r="4.500" fill="#fff" /><circle cx="11" cy="22.500" r="4.500" fill="#fff" /></symbol>
      <symbol id="software" viewBox="0 0 32 32"><rect y="3" width="32" height="26" rx="3" fill="#f2622d" /><path d="M0 16h32v10q0 3-3 3H3q-3 0-3-3z" fill="#f7733f" /><path d="M11 5Q11-1 16-1t5 6" fill="none" stroke="#e8cfa8" stroke-width="1.600" /><path d="M9.500 23.500L16 9l6.500 14.500M6.500 18.700h19M7.500 23.500h4.500M20 23.500h4.500" fill="none" stroke="#fff" stroke-width="2.400" /></symbol>
      <symbol id="notepad" viewBox="0 0 32 32"><path d="M1 2h19l4 7 1 20-24 3z" fill="url(#g-note)" /><path d="M2 2.500h17" stroke="#999" stroke-width="2" stroke-dasharray="1 1" /><path d="M3 14q5-5 10-1 1 5-4 5t-6-4M5 18l7 1" fill="#4fae3c" stroke="#3a8a2a" stroke-width="1.500" /><path d="M10 24v-5l2 5v-5m2 3q1-2 2 0t-2 0m3-2v4m2-2q1-2 2 0t-2 1" fill="none" stroke="#4d6c1a" stroke-width=".9" /><path d="M29 1l2 1-6.500 16-2 2-.5-3z" fill="#f0a83c" /><path d="M29 1l2 1-1 3-2-1z" fill="#d44" /></symbol>
      <symbol id="sheet" viewBox="0 0 32 32"><path d="M5.500 0H29v29q0 3-3 3H6q-3 0-3-3V3q0-3 2.500-3z" fill="#2f9a27" /><path d="M6 2h12l9 10v17q0 1-1 1H6q-1 0-1-1V3z" fill="#fff" /><path d="M19 0h10v10z" fill="#1c7016" /><path d="M8 12h15v14H8zM8 15.500h15M8 19h15M8 22.500h15M12 12v14M16 12v14M19.500 12v14" fill="none" stroke="#2f9a27" stroke-width="1.300" /><path d="M17 19.500h8V27h-8z" fill="#eee" /><path d="M18 23h2v4h-2z" fill="#e8682c" /><path d="M20.500 21h2v6h-2z" fill="#2f7fd0" /><path d="M23 24h2v3h-2z" fill="#e8a02c" /></symbol>
      <symbol id="impress" viewBox="0 0 32 32"><path d="M5.500 0H29v29q0 3-3 3H6q-3 0-3-3V3q0-3 2.500-3z" fill="#c85128" /><path d="M6 2h12l9 10v17q0 1-1 1H6q-1 0-1-1V3z" fill="#fff" /><path d="M19 0h10v10z" fill="#93340f" /><path d="M7 12.500h17v12H7z" fill="#f6cdb8" stroke="#c85128" /><path d="M9.500 16.500h6M9.500 19h6M9.500 21.500h6" stroke="#b03c14" stroke-width="1.300" /><path d="M17 21l2-3 1.500 1.500 3-3.500" fill="none" stroke="#2f9a57" stroke-width="1.200" /><path d="M12 27l3-2h2l3 2" fill="none" stroke="#444" /></symbol>
      <symbol id="blender" viewBox="0 0 32 32"><path d="M15.500 4.500L27 13M5 11.500h17M1 25l13-11" stroke="#e87d0d" stroke-width="3.800" stroke-linecap="round" /><ellipse cx="21.500" cy="19.500" rx="11.500" ry="11" fill="#e87d0d" /><circle cx="21.500" cy="19.500" r="7.400" fill="#fff" /><circle cx="21.500" cy="19.500" r="4.600" fill="#265787" /></symbol>
      <symbol id="gimp" viewBox="0 0 32 32"><path d="M27 3q2 8-1 14-4 6-13 3-5-2-6-8 4 1 8-3 8 2 12-6z" fill="#686052" /><ellipse cx="13" cy="10.500" rx="4.500" ry="4" fill="#eee" /><circle cx="18.500" cy="11.500" r="3.500" fill="#f4f4f4" /><circle cx="13.500" cy="10.500" r="1.600" fill="#222" /><circle cx="19" cy="11.500" r="1.400" fill="#222" /><ellipse cx="3.500" cy="14" rx="3.500" ry="4.500" fill="#141414" /><circle cx="2.500" cy="11.500" r="1" fill="#ddd" /><path d="M20 19l9 7" stroke="#e8a35c" stroke-width="2.300" /><path d="M26 23l6 6" stroke="#1f1f1f" stroke-width="2.500" /></symbol>
      <symbol id="minecraft" viewBox="0 0 32 32"><path d="M-1 7l17 8v18L0 25z" fill="#80583e" /><path d="M33 7l-17 8v18l16-8z" fill="#5f3f2c" /><rect v-for="(b, i) in pixelBlocks" :key="i" :x="b.x" :y="b.y" width="2" height="2" :fill="b.dark ? '#54382a' : '#94694b'" /><path d="M16-1l17 7-17 9-17-9z" fill="#6a9040" /><path d="M-1 6l17 9 17-9v5l-3 2-2-1-3 4-3-1-3 2-6 1-4-4-4 1-4-4-4-1z" fill="#466f2b" /><path d="M6 6l4 2 3-4 5 5 4-4 5 2" fill="none" stroke="#87a85a" stroke-width="1" /></symbol>
      <symbol id="mario" viewBox="0 0 32 32"><g transform="translate(3 -1) scale(2.150)"><rect v-for="(p, i) in pixels" :key="i" :x="p.x" :y="p.y" width="1.040" height="1.040" :fill="p.fill" /></g></symbol>
      <symbol id="evince" viewBox="0 0 32 32"><path d="M2 3L25-1l5 28-22 5z" fill="#f1f1f1" /><path d="M15 1q-6 11-1 16 5 3 13-1" fill="none" stroke="#2d79b4" stroke-width="2.300" /><path d="M0 25q8 3 16-2t14-1M1 30q8-8 16-6t14-3" fill="none" stroke="#444" stroke-width="1.300" /></symbol>
      <symbol id="help" viewBox="0 0 32 32"><circle cx="16" cy="16" r="16" fill="#2089e0" /><path d="M0 16a16 16 0 0 0 32 0z" fill="#46a2ea" /></symbol>
      <symbol id="calendar" viewBox="0 0 32 32"><rect width="32" height="32" rx="3" fill="url(#g-teal)" /><path d="M.7 12v8M31.300 12v8" stroke="#e8f8f4" stroke-width="1.300" /></symbol>
      <symbol id="apps" viewBox="0 0 32 32"><g fill="#f2f2f2"><template v-for="y in 3" :key="y"><rect v-for="x in 3" :key="x" :x="x * 8.500 - 3.300" :y="y * 8.500 - 3.300" width="4.600" height="4.600" rx="1.200" /></template></g></symbol>
    </svg>

    <header class="panel"><Strip :items="panel" /></header>

    <div class="titlebar">
      <span v-fit="358" class="window-title">Internet Archive: Page Not Found - Mozilla Firefox</span>
      <Strip :items="windowButtons" :from="1139" />
    </div>

    <section class="chrome">
      <svg class="fabric" width="1920" height="112" aria-hidden="true">
        <filter id="weft" x="0" y="0" width="100%" height="100%" color-interpolation-filters="sRGB"><feTurbulence type="fractalNoise" baseFrequency="0.04 0.8" numOctaves="2" seed="4" /><feColorMatrix values="2 0 0 0 -.5  2 0 0 0 -.5  2 0 0 0 -.48  0 0 0 0 1" /></filter>
        <filter id="warp" x="0" y="0" width="100%" height="100%" color-interpolation-filters="sRGB"><feTurbulence type="fractalNoise" baseFrequency="0.8 0.04" numOctaves="2" seed="9" /><feColorMatrix values="2 0 0 0 -.5  2 0 0 0 -.5  2 0 0 0 -.48  0 0 0 0 1" /></filter>
        <rect width="1920" height="112" fill="#6f717b" />
        <rect width="1920" height="112" filter="url(#weft)" opacity=".08" />
        <rect width="1920" height="112" filter="url(#warp)" opacity=".08" />
      </svg>
      <Strip class="menubar" :items="menus" />
      <div class="tabs">
        <div v-for="(tab, i) in tabs" :key="i" class="tab">
          <span v-if="tab === 'wiki'" class="wiki">W</span>
          <svg v-else class="favicon"><use :href="'#' + tab" /></svg>
        </div>
        <div class="tab-active">
          <svg class="favicon"><use href="#ia-fav" /></svg>
          <div class="tab-title"><span v-fit="174">Internet Archive: Page Not</span></div>
          <svg class="tab-close"><use href="#close" /></svg>
        </div>
        <svg class="favicon new-tab"><use href="#plus" /></svg>
      </div>
      <div class="toolbars">
        <div class="navbar">
          <Strip :items="navLeft" />
          <div class="urlbar">
            <Strip :items="identity" :from="126" />
            <span v-fit="162" class="address">https://<b>archive.org</b>/404</span>
            <Strip :items="pageActions" :from="1665" />
          </div>
          <Strip :items="navRight" :from="1735" />
        </div>
        <Strip class="bookmarks" :items="bookmarks" />
      </div>
    </section>

    <main class="page">
      <nav class="archive-nav">
        <Strip :items="media" />
        <Strip :items="accountLinks" :from="828" />
        <label class="search">
          <svg class="search-icon"><use href="#search" /></svg>
          <span v-fit="43">Search</span>
        </label>
      </nav>
      <Strip class="archive-links" :items="links" />
      <article class="message">
        <h1><span v-fit="241">Page not found</span></h1>
        <p><span v-fit="357">We’re sorry, the page you have requested is not available.</span></p>
      </article>
    </main>

    <footer class="dock">
      <div v-for="[name, windows] in dock" :key="name" class="launcher" :class="{ focused: name === 'ff', apps: name === 'apps' }">
        <svg class="app"><use :href="'#' + name" /></svg>
        <span v-if="glyphs[name]" class="glyph" :class="'glyph-' + name">{{ glyphs[name] }}</span>
        <div v-if="windows" class="running"><i v-for="n in windows" :key="n" /></div>
      </div>
    </footer>
  </div>
</template>

<style>
body { margin: 0; overflow: hidden; background: #fff; }
.wiki { flex: none; box-sizing: border-box; width: 16px; height: 16px; border-radius: 3px; background: #fff; color: #000; font: 15px/16px "Liberation Serif", serif; text-align: center; text-indent: 0; }
</style>

<style scoped>
.desktop {
  display: flex;
  flex-direction: column;
  width: 1920px;
  height: 1200px;
  font: 14px/20px "Noto Sans", "Open Sans", sans-serif;
  background: #fff;
  overflow: hidden;
}
.sprite { position: absolute; }
.strip { display: flex; align-items: center; height: 100%; }
.strip :deep(.icon) { flex: none; display: block; overflow: visible; }
.strip :deep(.label) { flex: none; white-space: pre; }
.strip :deep(.rule) { flex: none; background: currentColor; }
.strip :deep(u) { text-decoration: none; box-shadow: inset 0 -1px currentColor; display: inline-block; line-height: 17px; }
.strip :deep(.ublock) { position: relative; flex: none; height: 16px; }
.strip :deep(.ublock-shield) { display: block; width: 14px; height: 16px; }
.strip :deep(.ublock-badge) { position: absolute; top: -6px; right: 0; width: 14px; height: 11px; border-radius: 2px; background: #646464; color: #fff; font-size: 10px; line-height: 11px; text-align: center; }

.panel { height: 27px; border-bottom: 1px solid #393939; background: #1d1d1d; color: #f2f2f2; }
.panel :deep(.label) { margin-top: -1px; }
.panel :deep(.small) { font-size: 12.5px; }
.titlebar { display: flex; align-items: center; height: 35px; border-bottom: 1px solid #1c1c1c; background: #2c2c2c; color: #fff; }
.window-title { width: 358px; margin-left: 781px; font-weight: 700; white-space: pre; }

.chrome { position: relative; isolation: isolate; height: 112px; flex: none; color: #38383b; }
.fabric { position: absolute; inset: 0; z-index: -1; display: block; }
.menubar { height: 27px; }
.menubar :deep(.label) { text-shadow: 0 1px rgba(255, 255, 255, .12); }
.tabs { display: flex; height: 28px; box-shadow: inset 0 -1px #4d4e56; }
.tab { display: flex; align-items: center; width: 34px; padding-top: 1px; box-sizing: content-box; height: 27px; border-right: 1px solid transparent; border-image: linear-gradient(transparent 5px, #5d5f68 5px, #5d5f68 24px, transparent 24px) 1; }
.tab:nth-child(22) { border-image: none; }
.tab .favicon, .tab .wiki { margin-left: 9px; }
.favicon { flex: none; width: 16px; height: 16px; }
.tab-active { display: flex; align-items: center; width: 214px; height: 26px; margin-left: -1px; padding-left: 9px; border: 1px solid #55565d; border-top: 2px solid #38383b; border-bottom: 0; background: linear-gradient(#a2a3a9, #a9aab0); background: rgba(255, 255, 255, .38); }
.tab-title { width: 166px; margin-left: 6px; overflow: hidden; white-space: pre; -webkit-mask-image: linear-gradient(90deg, #000 135px, transparent 166px); mask-image: linear-gradient(90deg, #000 135px, transparent 166px); }
.tab-close { width: 10px; height: 10px; margin-left: 5px; }
.new-tab { margin: 6px 0 0 8px; }
.toolbars { height: 55px; background: rgba(255, 255, 255, .4); border-bottom: 1px solid #55565b; }
.navbar { display: flex; align-items: center; height: 33px; }
.navbar :deep(.faded) { opacity: .4; }
.navbar :deep(.blue) { color: #0a84ff; }
.urlbar { display: flex; align-items: center; width: 1608px; height: 23px; margin-left: 12px; border: 1px solid #7c7d82; border-radius: 4px; background: rgba(255, 255, 255, .82); color: #56565a; }
.urlbar :deep(.rule) { background: #222; }
.address { width: 162px; margin: 0 1318px 0 8px; padding-top: 1px; white-space: pre; color: #4c4c4e; }
.address b { font-weight: 400; color: #0c0c0d; }
.bookmarks { height: 22px; }
.bookmarks :deep(.label) { padding-top: 1px; }
.bookmarks :deep(.rule) { opacity: .35; }

.page { flex: 1; color: #333; font-family: "Liberation Sans", Arial, sans-serif; }
.archive-nav { display: flex; align-items: center; height: 50px; background: #222; color: #999; }
.archive-nav :deep(.white) { color: #fff; }
.archive-nav :deep(.wordmark) { color: #fff; font: 16px/24px "Liberation Serif", serif; transform: scaleY(1.22); }
.search { display: flex; align-items: center; width: 130px; height: 28px; margin: 2px 0 0 17px; border-radius: 4px; background: #fff; color: #777; font-family: "Noto Sans", sans-serif; }
.search span { padding-top: 1px; }
.search-icon { width: 18px; height: 18px; margin: 0 2px 1px 8px; }
.archive-links { box-sizing: border-box; height: 35px; padding-bottom: 2px; background: #333; color: #aaa; font-size: 12px; }
.message { padding: 16px 0 0 390px; color: #2c2c2c; }
.message h1 { margin: 0; height: 40px; font-size: 36px; font-weight: 400; line-height: 40px; }
.message p { margin: 12px 0 0; font-size: 14px; line-height: 20px; white-space: pre; }

.dock { display: flex; gap: 8px; height: 50px; padding: 1px 4px 2px; border-top: 1px solid #151515; background: #3b3b3b; }
.launcher { position: relative; flex: none; display: flex; align-items: center; justify-content: center; width: 50px; height: 50px; border-radius: 3px; }
.launcher.focused { background: #5e5e5e; }
.launcher.apps { margin-left: 6px; }
.app { width: 32px; height: 32px; overflow: visible; }
.glyph { position: absolute; inset: 9px; text-align: center; line-height: 32px; color: #fff; }
.glyph-chars { padding: 5px 0 0 14px; line-height: 27px; font-size: 13px; color: #444; }
.glyph-fonts { font: 21px/34px "Liberation Serif", serif; color: #333; }
.glyph-help { font-size: 25px; }
.glyph-calendar { font-size: 18.5px; }
.running { position: absolute; left: 0; right: 0; bottom: 0; display: flex; justify-content: center; gap: 2px; }
.running i { width: 5px; height: 5px; border-radius: 50%; background: #e95420; }
</style>
